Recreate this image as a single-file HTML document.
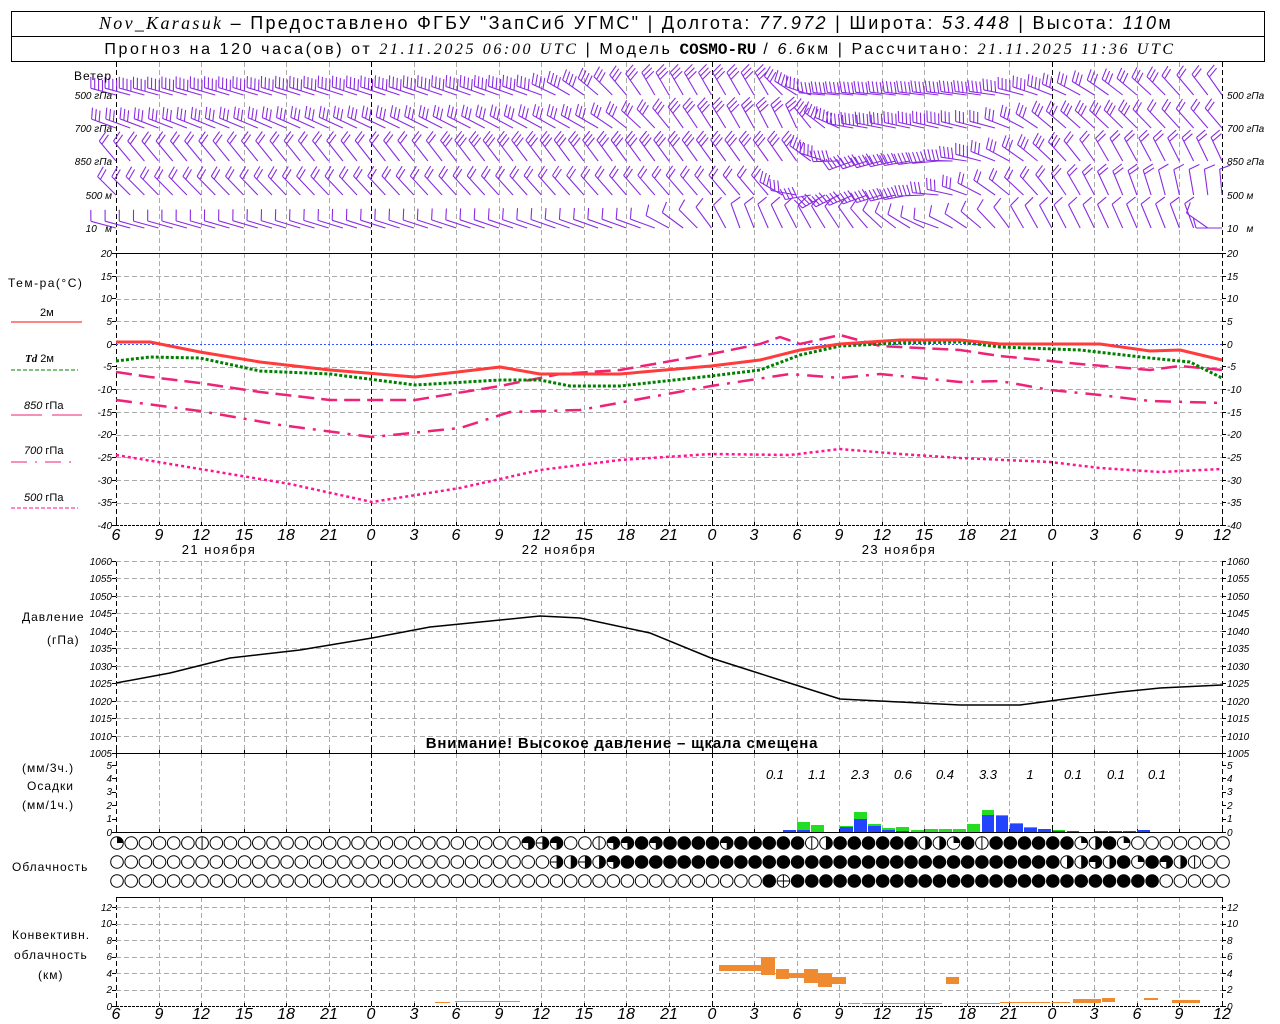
<!DOCTYPE html>
<html><head><meta charset="utf-8"><style>
body{margin:0;background:#fff;width:1280px;height:1024px;overflow:hidden}
svg{display:block}
text{font-family:"Liberation Sans","DejaVu Sans",sans-serif;fill:#000}
.n{font-size:10px;font-style:italic;font-family:"Liberation Sans",sans-serif}
.l{text-anchor:end}
.h{font-size:16px;font-style:italic;text-anchor:middle}
.lab{font-size:12px;letter-spacing:1px}
</style></head><body>
<svg id="s" width="1280" height="1024" viewBox="0 0 1280 1024" xmlns="http://www.w3.org/2000/svg">
<rect x="11.5" y="11.5" width="1253" height="50" fill="none" stroke="#000"/>
<line x1="11" y1="36.5" x2="1265" y2="36.5" stroke="#000"/>
<text x="636" y="29" text-anchor="middle" style="font-size:18px;letter-spacing:2.3px"><tspan style="font-family:'Liberation Serif',serif;font-style:italic">Nov_Karasuk</tspan> – Предоставлено ФГБУ "ЗапСиб УГМС" | Долгота: <tspan style="font-style:italic">77.972</tspan> | Широта: <tspan style="font-style:italic">53.448</tspan> | Высота: <tspan style="font-style:italic">110</tspan>м</text>
<text x="640" y="54" text-anchor="middle" style="font-size:16px;letter-spacing:2.6px">Прогноз на 120 часа(ов) от <tspan style="font-family:'Liberation Serif',serif;font-style:italic">21.11.2025 06:00 UTC</tspan>  | Модель <tspan style="font-family:'Liberation Mono',monospace;font-weight:bold;letter-spacing:0">COSMO-RU</tspan> / <tspan style="font-style:italic">6.6</tspan>км | Рассчитано: <tspan style="font-family:'Liberation Serif',serif;font-style:italic">21.11.2025 11:36 UTC</tspan></text>
<g id="grid"></g>
<g id="data"></g>
<text x="112" y="80" class="lab l">Ветер</text>
<text x="112" y="99" class="n l">500 гПа</text><text x="112" y="132" class="n l">700 гПа</text><text x="112" y="165" class="n l">850 гПа</text><text x="112" y="199" class="n l">500 м</text><text x="112" y="232" class="n l">10 &#160; м</text>
<text x="1227" y="99" class="n">500 гПа</text><text x="1227" y="132" class="n">700 гПа</text><text x="1227" y="165" class="n">850 гПа</text><text x="1227" y="199" class="n">500 м</text><text x="1227" y="232" class="n">10 &#160; м</text>
<text x="8" y="287" class="lab" style="letter-spacing:1.5px">Тем-ра(°C)</text>
<text x="40" y="316" style="font-size:11px">2м</text>
<line x1="11" y1="322" x2="82" y2="322" stroke="#ff3b3b" stroke-width="1.2"/>
<text x="25" y="362" style="font-size:11px"><tspan style="font-style:italic;font-weight:bold;font-family:'Liberation Serif',serif">Td</tspan>  2м</text>
<line x1="11" y1="370" x2="78" y2="370" stroke="#008000" stroke-dasharray="4,2"/>
<text x="24" y="409" style="font-size:11px"><tspan style="font-style:italic">850</tspan> гПа</text>
<line x1="11" y1="415" x2="42" y2="415" stroke="#ee2277"/><line x1="52" y1="415" x2="82" y2="415" stroke="#ee2277"/>
<text x="24" y="454" style="font-size:11px"><tspan style="font-style:italic">700</tspan> гПа</text>
<line x1="11" y1="462" x2="78" y2="462" stroke="#ee2277" stroke-dasharray="16,8,2,8"/>
<text x="24" y="501" style="font-size:11px"><tspan style="font-style:italic">500</tspan> гПа</text>
<line x1="11" y1="508" x2="78" y2="508" stroke="#ff1493" stroke-dasharray="4,2"/>
<g class="n">
<text x="112" y="257" class="l">20</text><text x="112" y="280" class="l">15</text><text x="112" y="302" class="l">10</text><text x="112" y="325" class="l">5</text><text x="112" y="348" class="l">0</text><text x="112" y="370" class="l">-5</text><text x="112" y="393" class="l">-10</text><text x="112" y="416" class="l">-15</text><text x="112" y="438" class="l">-20</text><text x="112" y="461" class="l">-25</text><text x="112" y="484" class="l">-30</text><text x="112" y="506" class="l">-35</text><text x="112" y="529" class="l">-40</text>
<text x="1227" y="257">20</text><text x="1227" y="280">15</text><text x="1227" y="302">10</text><text x="1227" y="325">5</text><text x="1227" y="348">0</text><text x="1227" y="370">-5</text><text x="1227" y="393">-10</text><text x="1227" y="416">-15</text><text x="1227" y="438">-20</text><text x="1227" y="461">-25</text><text x="1227" y="484">-30</text><text x="1227" y="506">-35</text><text x="1227" y="529">-40</text>
<text x="112" y="565" class="l">1060</text><text x="112" y="582" class="l">1055</text><text x="112" y="600" class="l">1050</text><text x="112" y="617" class="l">1045</text><text x="112" y="635" class="l">1040</text><text x="112" y="652" class="l">1035</text><text x="112" y="670" class="l">1030</text><text x="112" y="687" class="l">1025</text><text x="112" y="705" class="l">1020</text><text x="112" y="722" class="l">1015</text><text x="112" y="740" class="l">1010</text><text x="112" y="757" class="l">1005</text>
<text x="1227" y="565">1060</text><text x="1227" y="582">1055</text><text x="1227" y="600">1050</text><text x="1227" y="617">1045</text><text x="1227" y="635">1040</text><text x="1227" y="652">1035</text><text x="1227" y="670">1030</text><text x="1227" y="687">1025</text><text x="1227" y="705">1020</text><text x="1227" y="722">1015</text><text x="1227" y="740">1010</text><text x="1227" y="757">1005</text>
<text x="112" y="836" class="l">0</text><text x="112" y="822" class="l">1</text><text x="112" y="809" class="l">2</text><text x="112" y="795" class="l">3</text><text x="112" y="782" class="l">4</text><text x="112" y="769" class="l">5</text>
<text x="1227" y="836">0</text><text x="1227" y="822">1</text><text x="1227" y="809">2</text><text x="1227" y="795">3</text><text x="1227" y="782">4</text><text x="1227" y="769">5</text>
<text x="112" y="1010" class="l">0</text><text x="112" y="993" class="l">2</text><text x="112" y="977" class="l">4</text><text x="112" y="960" class="l">6</text><text x="112" y="944" class="l">8</text><text x="112" y="927" class="l">10</text><text x="112" y="911" class="l">12</text>
<text x="1227" y="1010">0</text><text x="1227" y="993">2</text><text x="1227" y="977">4</text><text x="1227" y="960">6</text><text x="1227" y="944">8</text><text x="1227" y="927">10</text><text x="1227" y="911">12</text>
</g>
<g class="h">
<text x="116" y="540">6</text><text x="159" y="540">9</text><text x="201" y="540">12</text><text x="244" y="540">15</text><text x="286" y="540">18</text><text x="329" y="540">21</text><text x="371" y="540">0</text><text x="414" y="540">3</text><text x="456" y="540">6</text><text x="499" y="540">9</text><text x="541" y="540">12</text><text x="584" y="540">15</text><text x="626" y="540">18</text><text x="669" y="540">21</text><text x="712" y="540">0</text><text x="754" y="540">3</text><text x="797" y="540">6</text><text x="839" y="540">9</text><text x="882" y="540">12</text><text x="924" y="540">15</text><text x="967" y="540">18</text><text x="1009" y="540">21</text><text x="1052" y="540">0</text><text x="1094" y="540">3</text><text x="1137" y="540">6</text><text x="1179" y="540">9</text><text x="1222" y="540">12</text>
<text x="116" y="1019">6</text><text x="159" y="1019">9</text><text x="201" y="1019">12</text><text x="244" y="1019">15</text><text x="286" y="1019">18</text><text x="329" y="1019">21</text><text x="371" y="1019">0</text><text x="414" y="1019">3</text><text x="456" y="1019">6</text><text x="499" y="1019">9</text><text x="541" y="1019">12</text><text x="584" y="1019">15</text><text x="626" y="1019">18</text><text x="669" y="1019">21</text><text x="712" y="1019">0</text><text x="754" y="1019">3</text><text x="797" y="1019">6</text><text x="839" y="1019">9</text><text x="882" y="1019">12</text><text x="924" y="1019">15</text><text x="967" y="1019">18</text><text x="1009" y="1019">21</text><text x="1052" y="1019">0</text><text x="1094" y="1019">3</text><text x="1137" y="1019">6</text><text x="1179" y="1019">9</text><text x="1222" y="1019">12</text>
</g>
<text x="219" y="554" text-anchor="middle" style="font-size:13px;letter-spacing:1.5px">21 ноября</text>
<text x="559" y="554" text-anchor="middle" style="font-size:13px;letter-spacing:1.5px">22 ноября</text>
<text x="899" y="554" text-anchor="middle" style="font-size:13px;letter-spacing:1.5px">23 ноября</text>
<text x="22" y="621" class="lab">Давление</text>
<text x="47" y="644" class="lab">(гПа)</text>
<text x="622" y="748" text-anchor="middle" style="font-size:15px;font-weight:bold;letter-spacing:0.8px">Внимание! Высокое давление – щкала смещена</text>
<text x="22" y="772" class="lab">(мм/3ч.)</text>
<text x="27" y="790" class="lab">Осадки</text>
<text x="22" y="809" class="lab">(мм/1ч.)</text>
<text x="12" y="871" class="lab">Облачность</text>
<text x="12" y="939" class="lab">Конвективн.</text>
<text x="14" y="959" class="lab">облачность</text>
<text x="38" y="979" class="lab">(км)</text>
<g style="font-size:13px;font-style:italic" text-anchor="middle">
<text x="775" y="779">0.1</text><text x="817" y="779">1.1</text><text x="860" y="779">2.3</text><text x="903" y="779">0.6</text><text x="945" y="779">0.4</text><text x="988" y="779">3.3</text><text x="1030" y="779">1</text><text x="1073" y="779">0.1</text><text x="1116" y="779">0.1</text><text x="1157" y="779">0.1</text>
</g>
</svg>
<script>
(function(){
var NS="http://www.w3.org/2000/svg";
var G=document.getElementById("grid"),D=document.getElementById("data");
function el(p,tag,a){var e=document.createElementNS(NS,tag);for(var k in a)e.setAttribute(k,a[k]);p.appendChild(e);return e;}
function ln(p,x1,y1,x2,y2,c,w,da){var a={x1:x1,y1:y1,x2:x2,y2:y2,stroke:c,"stroke-width":w||1};if(da)a["stroke-dasharray"]=da;return el(p,"line",a);}
var X=function(h){return 116+h*14.179;};
for(var h=0;h<=78;h+=3){var x=Math.round(X(h))+0.5;var day=(h==18||h==42||h==66||h==0||h==78);
 var c=day?"#000":"#aaa";
 [[62,253],[253,525],[561,753],[753,832],[897,1006]].forEach(function(r){ln(G,x,r[0],x,r[1],c,1,"5,3");});
 [[253,525],[561,753],[753,832],[897,1006]].forEach(function(r){ln(G,x,r[1],x,r[1]-3,"#000",1);});
}
for(var v=15;v>=-35;v-=5){var y=Math.round(344-v*4.533)+0.5; if(v==0)ln(G,116,y,1222,y,"#3355ff",1,"2,2"); else ln(G,116,y,1222,y,"#aaa",1,"5,3");}
ln(G,116,253.5,1222,253.5,"#000",1);ln(G,116,525.5,1222,525.5,"#000",1,"3,1");
for(var p=1060;p>1005;p-=5){var y=Math.round(561+(1060-p)*3.491)+0.5;ln(G,116,y,1222,y,"#aaa",1,"5,3");}
ln(G,116,753.5,1222,753.5,"#000",1);
ln(G,116,832.5,1222,832.5,"#000",1);
ln(G,116,897.5,1222,897.5,"#000",1);
for(var k=2;k<=12;k+=2){var y=Math.round(1006-k*8.25)+0.5;ln(G,116,y,1222,y,"#aaa",1,"5,3");}
ln(G,116,1006.5,1222,1006.5,"#000",1,"3,1");
function ticks(y0,y1,st){for(var y=y0;y<=y1+0.1;y+=st){ln(G,112,Math.round(y)+.5,116,Math.round(y)+.5,"#000",1);ln(G,1222,Math.round(y)+.5,1226,Math.round(y)+.5,"#000",1);}}
ticks(253,525,22.665);ticks(561,753,17.455);ticks(765,832,13.4);ticks(907,1006,16.5);
function poly(pts,c,w,da){var a={points:pts.map(function(p){return p.join(",");}).join(" "),fill:"none",stroke:c,"stroke-width":w,"stroke-linejoin":"round"};if(da)a["stroke-dasharray"]=da;el(D,"polyline",a);}
poly([[116,372],[150,377],[200,383],[260,392],[330,400],[415,400],[500,386],[560,374],[620,370],[711,354],[760,344],[780,337],[800,344],[840,335],[880,346],[960,350],[1000,356],[1080,364],[1150,370],[1180,366],[1222,370]],"#ee2277",2.5,"16,7");
poly([[116,400],[200,411],[280,425],[372,437],[460,428],[510,412],[580,410],[711,386],[790,374],[840,378],[880,374],[960,382],[1000,381],[1050,390],[1100,395],[1150,401],[1222,403]],"#ee2277",2.5,"16,8,3,8");
poly([[116,455],[200,469],[290,484],[372,502],[460,488],[540,470],[620,460],[711,454],[790,455],[840,449],[900,454],[960,458],[1050,462],[1100,468],[1160,472],[1222,469]],"#ff1493",2.5,"3,3");
poly([[116,361],[150,357],[200,358],[260,371],[330,374],[415,385],[500,380],[540,380],[570,386],[620,386],[711,376],[760,370],[800,355],[840,346],[900,343],[960,342],[1000,347],[1080,350],[1150,358],[1190,362],[1222,378]],"#008000",3,"3,2");
poly([[116,342],[150,342],[200,352],[260,362],[330,370],[415,377],[500,367],[540,374],[620,374],[711,366],[760,360],[800,350],[840,344],[900,340],[960,340],[1000,344],[1100,344],[1150,351],[1180,350],[1222,360]],"#ff3b3b",3);
poly([[116,683],[170,673],[230,658],[300,650],[372,638],[430,627],[540,616],[580,618],[650,633],[711,658],[780,680],[840,699],[900,702],[960,705],[1020,705],[1080,697],[1120,692],[1160,688],[1222,685]],"#000",1.5);
var levels=[[95,[[0,195,4],[30,200,4],[38,240,3],[46,240,3],[50,185,4],[62,188,4],[70,215,3],[78,235,2]]],
[128,[[0,200,3],[34,210,3],[40,235,3],[48,245,3],[52,190,5],[62,195,3],[66,220,3],[78,230,2]]],
[161,[[0,230,2],[48,235,3],[52,160,5],[58,175,4],[64,215,3],[70,240,2],[78,245,2]]],
[195,[[0,225,2],[46,230,2],[50,150,4],[56,170,4],[62,215,2],[68,240,2],[78,265,1]]],
[228,[[0,195,1],[38,200,1],[44,250,1],[52,235,1],[58,200,1],[64,240,1],[76,250,1],[78,180,1]]]];
function interp(k,h){for(var i=0;i<k.length-1;i++){if(h<=k[i+1][0]){var t=(h-k[i][0])/(k[i+1][0]-k[i][0]);return [k[i][1]+(k[i+1][1]-k[i][1])*t,Math.round(k[i][2]+(k[i+1][2]-k[i][2])*t)];}}return [k[k.length-1][1],k[k.length-1][2]];}
var pd="";
levels.forEach(function(L){for(var h=0;h<=78;h++){var r=interp(L[1],h),a=r[0]*Math.PI/180,dx=Math.cos(a),dy=Math.sin(a);var x=X(h),y=L[0];var tx=x+dx*26,ty=y+dy*26;
 pd+="M"+x.toFixed(1)+" "+y.toFixed(1)+"L"+tx.toFixed(1)+" "+ty.toFixed(1);
 var px=-dy,py=dx;if(py>0){px=-px;py=-py;}
 for(var k=0;k<r[1];k++){var sx=tx-dx*4*k,sy=ty-dy*4*k;pd+="M"+sx.toFixed(1)+" "+sy.toFixed(1)+"L"+(sx+px*11+dx*3).toFixed(1)+" "+(sy+py*11+dy*3).toFixed(1);}
}});
el(D,"path",{d:pd,stroke:"#8a2be2","stroke-width":1.1,fill:"none"});
var bars=[[783,796,2,0],[797,810,2,10],[811,824,0,7],[840,853,5,6],[854,867,13,20],[868,881,6,8],[882,895,2,4],[896,909,1,5],[911,924,0,2],[925,938,0,3],[939,952,0,3],[953,966,0,3],[967,980,0,8],[982,994,17,22],[996,1008,16,17],[1010,1023,8,9],[1024,1037,4,5],[1038,1051,3,0],[1053,1065,1,2],[1067,1079,1,0],[1095,1108,1,0],[1109,1122,1,0],[1123,1136,1,0],[1137,1150,2,0]];
bars.forEach(function(b){if(b[3]>b[2])el(D,"rect",{x:b[0],y:832-b[3],width:b[1]-b[0],height:b[3],fill:"#22dd22"});if(b[2])el(D,"rect",{x:b[0],y:832-b[2],width:b[1]-b[0],height:b[2],fill:"#2244ff"});});
var cv=[[719,761,965,971],[761,775,957,975],[776,789,969,979],[789,804,973,978],[804,818,969,983],[818,832,973,987],[832,846,977,984],[946,959,977,984],[1073,1101,999,1003],[1102,1115,998,1002],[1144,1158,998,1000],[1172,1200,1000,1003],
[435,450,1002,1003],[455,520,1001,1002],[848,860,1003,1004],[862,942,1003,1004],[960,1000,1003,1004],[1000,1050,1002,1003],[1052,1070,1002,1003]];
cv.forEach(function(b){el(D,"rect",{x:b[0],y:b[2],width:b[1]-b[0],height:b[3]-b[2],fill:"#f08a30"});});
var r1=[1,0,0,0,0,0,'|'].concat(Array(22).fill(0)).concat([3,'-',3,0,0,'|',3,3,4,3,4,4,4,4]).concat([3,4,4,4,4,4,'|',2,4,4,4,4,4,4,2,2,1,4,'|',4,4,4,4,4,4,1,2,4,1,0,0,0,0,0,0,0,0]);
var r2=Array(31).fill(0).concat(['-',2,'-',2,3,4,4,4,4,4,4]).concat(Array(25).fill(4)).concat([2,2,3,2,4,1,4,3,2,'|',0,0]);
var r3=Array(46).fill(0).concat([4,'+']).concat(Array(26).fill(4)).concat([0,0,0,0,0]);
var cp="",cf="";
[[843,r1],[862,r2],[881,r3]].forEach(function(R){var y=R[0];for(var i=0;i<79;i++){var x=117+i*14.179,t=R[1][i],r=6.3;
 el(D,"circle",{cx:x.toFixed(1),cy:y,r:r,fill:t===4?"#000":"#fff",stroke:"#000","stroke-width":1});
 if(t===1)cf+="M"+x+" "+y+"V"+(y-r)+"A"+r+" "+r+" 0 0 1 "+(x+r)+" "+y+"Z";
 if(t===2)cf+="M"+x+" "+(y-r)+"A"+r+" "+r+" 0 0 1 "+x+" "+(y+r)+"Z";
 if(t===3)cf+="M"+x+" "+y+"H"+(x-r)+"A"+r+" "+r+" 0 1 1 "+x+" "+(y+r)+"Z";
 if(t==='|'||t==='+')cp+="M"+x+" "+(y-r)+"V"+(y+r);
 if(t==='-'||t==='+'){cp+="M"+(x-r)+" "+y+"H"+(x+r);}
 if(t==='-')cf+="M"+x+" "+(y-r)+"A"+r+" "+r+" 0 0 1 "+x+" "+(y+r)+"Z";
}});
el(D,"path",{d:cf,fill:"#000"});el(D,"path",{d:cp,stroke:"#000",fill:"none"});
})();
</script>
</body></html>
